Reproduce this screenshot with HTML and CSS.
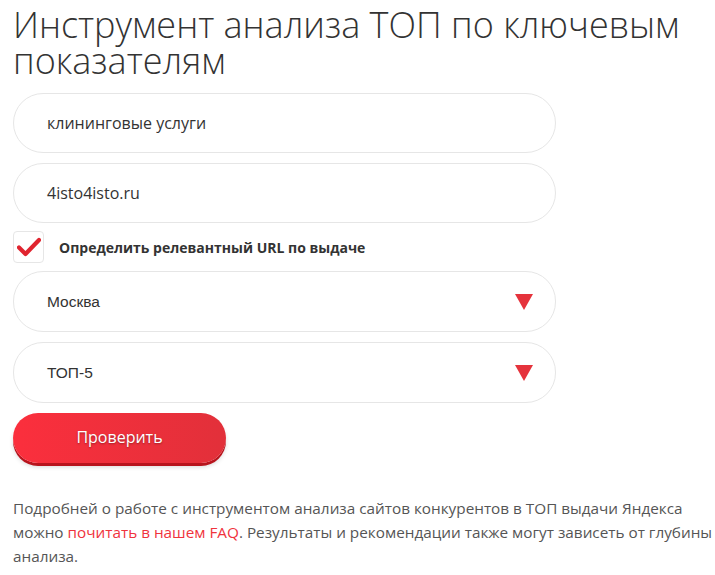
FILE: index.html
```html
<!DOCTYPE html>
<html lang="ru">
<head>
<meta charset="utf-8">
<title>Инструмент анализа ТОП</title>
<link rel="stylesheet" href="styles.css">
</head>
<body>
<div class="page">
  <h1 class="title">Инструмент анализа ТОП по ключевым показателям</h1>
  <form class="form">
    <div class="field"><span class="field-text">клининговые услуги</span></div>
    <div class="field"><span class="field-text">4isto4isto.ru</span></div>
    <label class="check">
      <span class="check-box">
        <svg width="24" height="20" viewBox="0 0 24 20"><path d="M2 10.5 L8.5 17 L22 3" fill="none" stroke="#e0242f" stroke-width="4.2" stroke-linecap="round" stroke-linejoin="round"/></svg>
      </span>
      <span class="check-label">Определить релевантный URL по выдаче</span>
    </label>
    <div class="field select"><span class="select-text">Москва</span><span class="arrow"></span></div>
    <div class="field select"><span class="select-text">ТОП-5</span><span class="arrow"></span></div>
    <button type="button" class="btn">Проверить</button>
  </form>
  <p class="note">Подробней о работе с инструментом анализа сайтов конкурентов в ТОП выдачи Яндекса можно <a class="link" href="#">почитать в нашем FAQ</a>. Результаты и рекомендации также могут зависеть от глубины анализа.</p>
</div>
</body>
</html>
```
FILE: styles.css
```css
html, body {
  margin: 0;
  padding: 0;
  background: #fff;
}
.page {
  padding: 0 0 0 13px;
  font-family: "Open Sans", "Liberation Sans", sans-serif;
  color: #333;
}
.title {
  margin: 7px 0 14px;
  font-size: 36px;
  line-height: 36px;
  font-weight: 300;
  color: #333;
}
.form {
  display: flex;
  flex-direction: column;
  align-items: flex-start;
  gap: 10px;
}
.field {
  box-sizing: border-box;
  width: 543px;
  height: 60px;
  border: 1px solid #e6e6e6;
  border-radius: 30px;
  display: flex;
  align-items: center;
  padding: 0 22px 0 33px;
}
.field-text {
  font-size: 16px;
  color: #333;
}
.select {
  height: 61px;
  justify-content: space-between;
}
.select-text {
  font-family: "Liberation Sans", Arial, sans-serif;
  font-size: 15.5px;
  color: #333;
}
.arrow {
  width: 0;
  height: 0;
  border-left: 9px solid transparent;
  border-right: 9px solid transparent;
  border-top: 16px solid #e5333c;
}
.check {
  display: flex;
  align-items: center;
  gap: 15px;
  height: 32px;
  margin: -2px 0;
}
.check-box {
  box-sizing: border-box;
  width: 31px;
  height: 32px;
  border: 1px solid #e6e6e6;
  border-radius: 4px;
  display: flex;
  align-items: center;
  justify-content: center;
}
.check-label {
  font-size: 14px;
  font-weight: 700;
  color: #333;
}
.btn {
  margin-top: 0;
  width: 213px;
  height: 50px;
  border: none;
  border-radius: 25px;
  background: linear-gradient(to right, #fb2f3d, #e2303a);
  box-shadow: 0 3px 0 #b8141d, 0 4px 4px rgba(0,0,0,0.15);
  color: #fff;
  font-family: "Open Sans", sans-serif;
  font-size: 16px;
  text-shadow: 0 1px 2px rgba(0,0,0,0.35);
  cursor: pointer;
  padding: 0 0 3px;
}
.note {
  margin: 33px 0 0;
  font-size: 15.3px;
  line-height: 24px;
  color: #555;
}
.link {
  color: #f0333d;
  text-decoration: none;
}
```
